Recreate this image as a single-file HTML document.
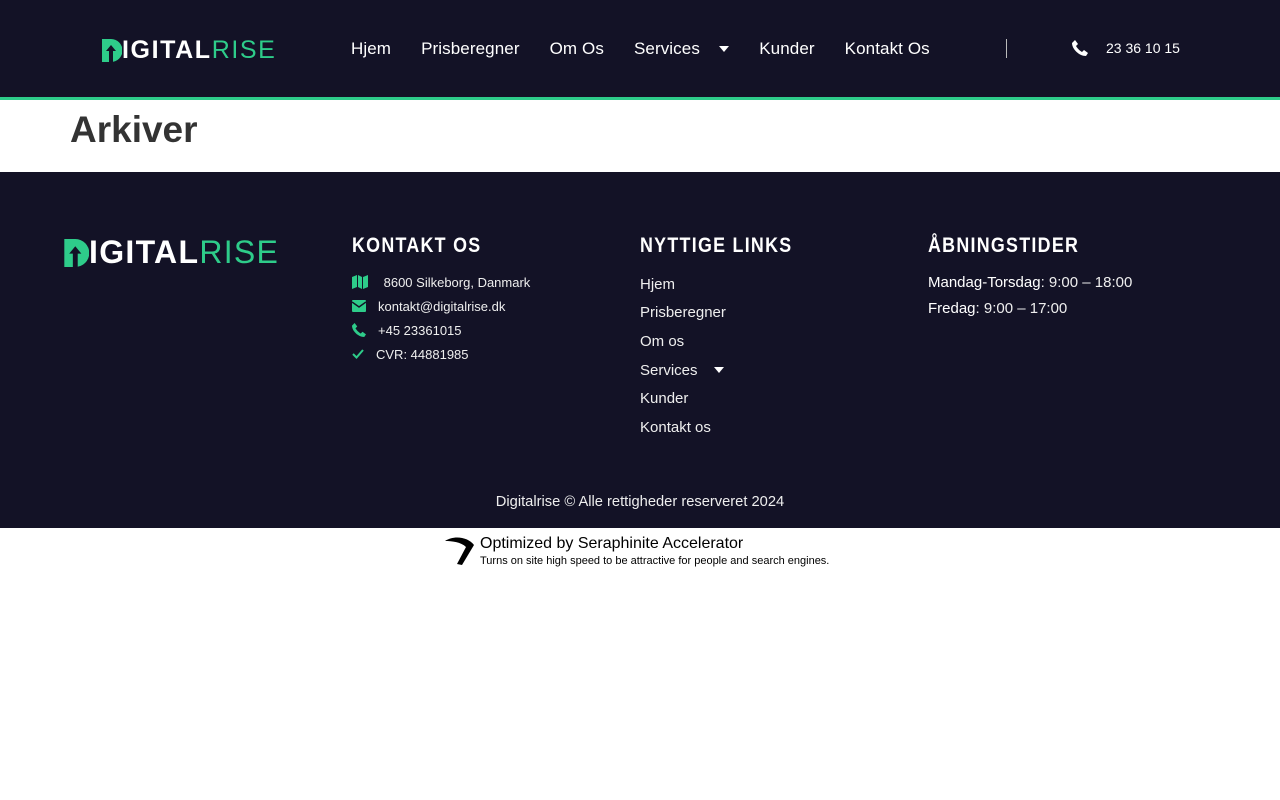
<!DOCTYPE html>
<html><head><meta charset="utf-8"><style>
*{margin:0;padding:0;box-sizing:border-box}
body{width:1280px;height:800px;background:#fff;font-family:"Liberation Sans",sans-serif;overflow:hidden}
.hdr{background:#131226;position:relative;border-bottom:3px solid #2ecc8a;height:100px}
.logo{position:absolute;font-weight:700;display:flex;align-items:center}
.logo .w{color:#fff}.logo .g{color:#2ecc8a;font-weight:400}
.nav{position:absolute;top:39px;left:351px;display:flex;gap:30px;color:#fff;font-size:17px}
.nav span{display:inline-flex;align-items:center;letter-spacing:0.1px}
.sep{position:absolute;left:1006px;top:39px;width:1px;height:19px;background:#bbb}
.ph{position:absolute;left:1072px;top:40px;color:#fff;font-size:14px;display:flex;align-items:center;gap:18px}
h1{position:absolute;left:70px;top:109px;font-size:37px;color:#333;font-weight:700}
.ftr{position:absolute;top:172px;left:0;width:1280px;height:356px;background:#131226;color:#fff}
.col{position:absolute;top:62px}
.col h3{font-size:21px;font-weight:700;letter-spacing:1.5px;transform:scaleX(0.85);transform-origin:left;margin-bottom:12px}
.ci{display:flex;align-items:center;font-size:13px;height:24px;color:#eee}
.ci svg{margin-right:12px}
.lk{font-size:15px;height:28.6px;color:#eee;display:flex;align-items:center}
.op{font-size:15px;line-height:26px;color:#eee}
.op b{color:#fff;font-weight:400}
.copy{position:absolute;top:322px;width:100%;text-align:center;font-size:14.7px;color:#eee}
.sera{position:absolute;left:444px;top:535px;display:flex}
</style></head><body>
<div class="hdr">
 <div class="logo" style="left:102px;top:36px;font-size:25px;letter-spacing:1.6px">
  <svg width="20" height="23" viewBox="0 0 20 23"><path d="M0 0h9a11 11 0 0 1 0 23H0z" fill="#2ecc8a"/><path d="M9 6l-5 6h3v11h4V12h3z" fill="#131226"/></svg>
  <span class="w">IGITAL</span><span class="g">RISE</span></div>
 <div class="nav"><span>Hjem</span><span>Prisberegner</span><span>Om Os</span><span>Services&nbsp;&nbsp;&nbsp;&nbsp;<svg width="10" height="6"><path d="M0 0h10L5 6z" fill="#fff"/></svg></span><span>Kunder</span><span>Kontakt Os</span></div>
 <div class="sep"></div>
 <div class="ph"><svg width="16" height="16" viewBox="0 0 16 16"><path d="M3 0l3 4-2 2c1 2 4 5 6 6l2-2 4 3-2 3C7 16 0 9 0 3z" fill="#fff"/></svg><span>23 36 10 15</span></div>
</div>
<h1>Arkiver</h1>
<div class="ftr">
 <div class="logo" style="left:64px;top:62px;font-size:32px;letter-spacing:1.3px">
  <svg width="25" height="28" viewBox="0 0 20 23"><path d="M0 0h9a11 11 0 0 1 0 23H0z" fill="#2ecc8a"/><path d="M9 6l-5 6h3v11h4V12h3z" fill="#131226"/></svg>
  <span class="w">IGITAL</span><span class="g">RISE</span></div>
 <div class="col" style="left:352px">
  <h3>KONTAKT OS</h3>
  <div class="ci"><svg width="16" height="14"><path d="M0 2l5-2v12l-5 2zM6 0l4 2v12l-4-2zM11 2l5-2v12l-5 2z" fill="#2ecc8a"/></svg>&nbsp;8600 Silkeborg, Danmark</div>
  <div class="ci"><svg width="14" height="12"><rect width="14" height="12" rx="1" fill="#2ecc8a"/><path d="M0 2l7 5 7-5" stroke="#131226" stroke-width="1.5" fill="none"/></svg>kontakt@digitalrise.dk</div>
  <div class="ci"><svg width="14" height="14" viewBox="0 0 16 16"><path d="M3 0l3 4-2 2c1 2 4 5 6 6l2-2 4 3-2 3C7 16 0 9 0 3z" fill="#2ecc8a"/></svg>+45 23361015</div>
  <div class="ci"><svg width="12" height="10"><path d="M1 5l3.5 3.5L11 1" stroke="#2ecc8a" stroke-width="2" fill="none"/></svg>CVR: 44881985</div>
 </div>
 <div class="col" style="left:640px">
  <h3>NYTTIGE LINKS</h3>
  <div class="lk">Hjem</div><div class="lk">Prisberegner</div><div class="lk">Om os</div>
  <div class="lk">Services&nbsp;&nbsp;&nbsp;&nbsp;<svg width="10" height="6"><path d="M0 0h10L5 6z" fill="#fff"/></svg></div>
  <div class="lk">Kunder</div><div class="lk">Kontakt os</div>
 </div>
 <div class="col" style="left:928px">
  <h3>ÅBNINGSTIDER</h3>
  <div class="op"><b>Mandag-Torsdag</b>: 9:00 – 18:00<br><b>Fredag</b>: 9:00 – 17:00</div>
 </div>
 <div class="copy">Digitalrise © Alle rettigheder reserveret 2024</div>
</div>
<div class="sera">
 <svg width="32" height="32" viewBox="0 0 32 32"><path d="M1 6C10 0 24 2 30 10L18 30 13 29 22 12C17 7 8 6 1 6z" fill="#000"/></svg>
 <div style="margin-left:4px"><div style="font-size:16px;color:#000;line-height:18px">Optimized by Seraphinite Accelerator</div><div style="font-size:11px;color:#000;line-height:16px">Turns on site high speed to be attractive for people and search engines.</div></div>
</div>
</body></html>
